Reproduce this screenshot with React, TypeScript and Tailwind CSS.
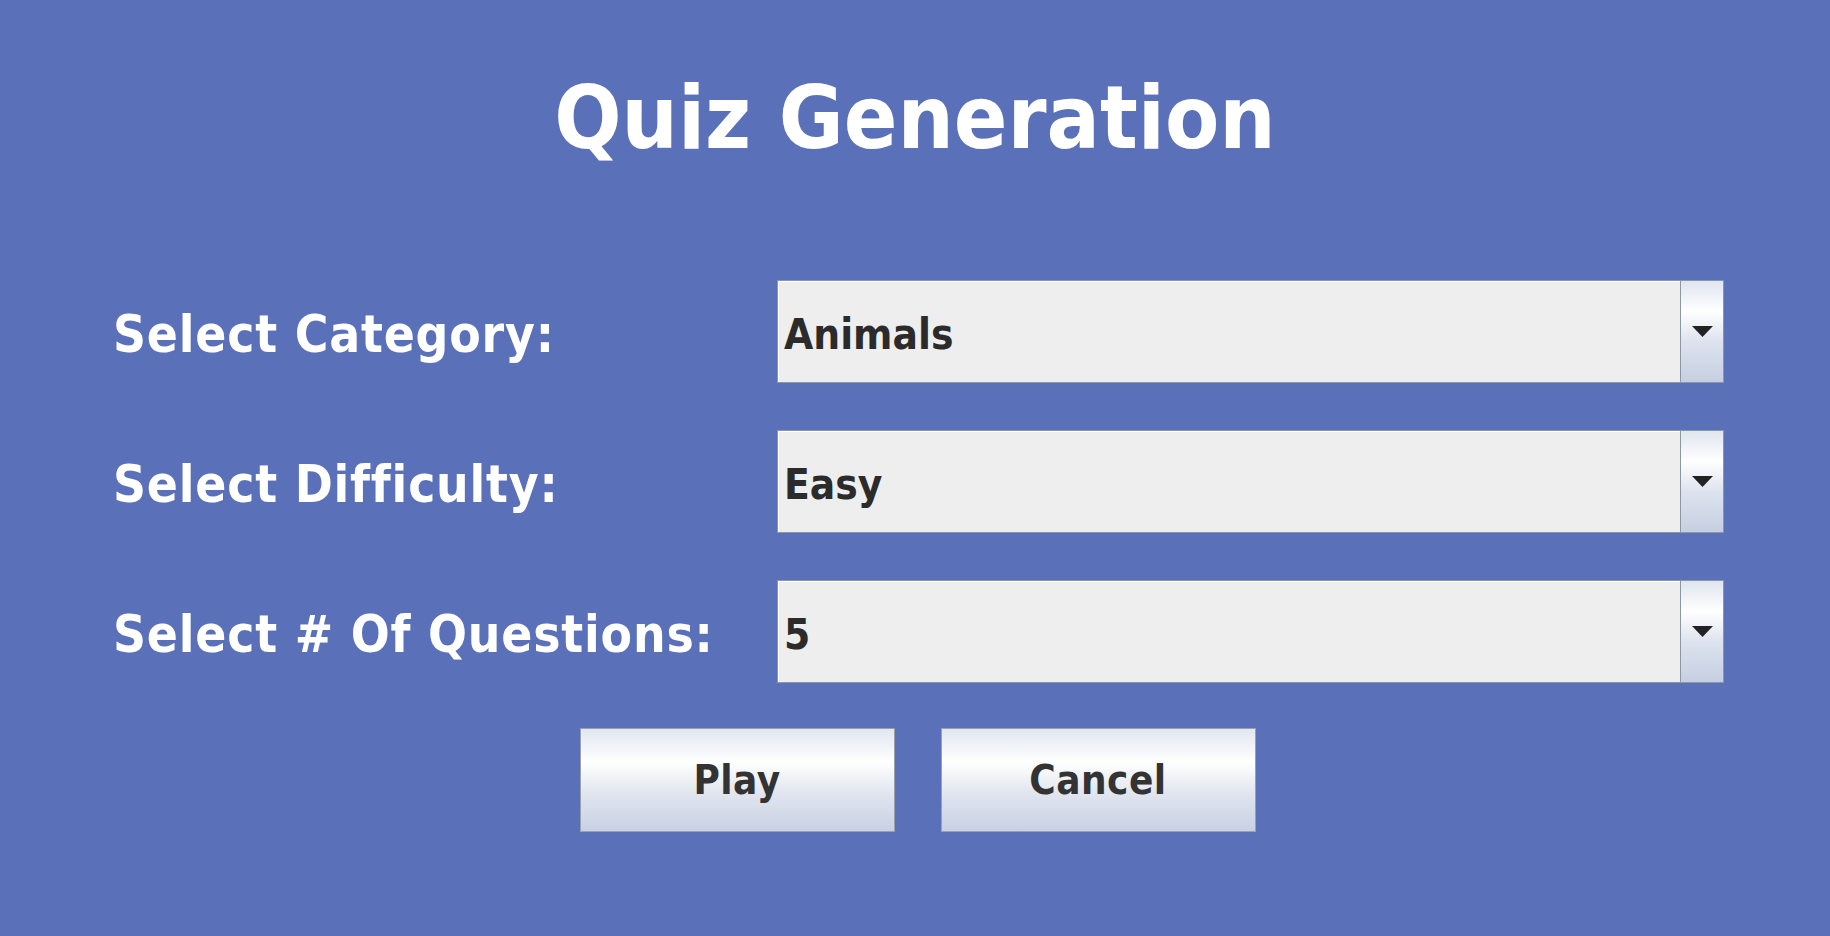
import { useState } from 'react';

const font = "font-['DejaVu_Sans_Condensed','DejaVu_Sans',Tahoma,sans-serif]";

interface ComboProps {
  value: string;
  options: string[];
  onChange: (v: string) => void;
}

const Combo = ({ value, options, onChange }: ComboProps) => (
  <div className="relative flex h-[103px] w-[947px] border border-[#8d96a3] bg-[#eeeeee]">
    <div className="flex flex-1 items-center border-t border-l border-white pt-[6px] pl-[5px]">
      <span className={`${font} text-[42px] font-bold leading-none text-[#2b2b2b]`}>{value}</span>
    </div>
    <div className="flex w-[43px] items-center justify-center border-l border-[#8d96a3] bg-[linear-gradient(to_bottom,#dfe5ef_0%,#ffffff_30%,#dde3ee_60%,#c6cfe2_100%)]">
      <svg width="21" height="11" viewBox="0 0 21 11">
        <polygon points="0,0 21,0 10.5,11" fill="#222222" />
      </svg>
    </div>
    <select
      value={value}
      onChange={(e) => onChange(e.target.value)}
      className="absolute inset-0 cursor-pointer opacity-0"
    >
      {options.map((o) => (
        <option key={o}>{o}</option>
      ))}
    </select>
  </div>
);

const Button = ({ label }: { label: string }) => (
  <button
    className={`${font} h-[104px] w-[315px] border border-[#9aa1ad] bg-[linear-gradient(to_bottom,#e1e6f0_0%,#ffffff_32%,#dfe4ee_65%,#c8d1e4_100%)] text-[40px] font-bold leading-none tracking-[0.5px] text-[#333333]`}
  >
    {label}
  </button>
);

const App = () => {
  const [category, setCategory] = useState('Animals');
  const [difficulty, setDifficulty] = useState('Easy');
  const [count, setCount] = useState('5');

  const rows = [
    { label: 'Select Category:', value: category, options: ['Animals', 'Sports', 'History', 'Science'], set: setCategory },
    { label: 'Select Difficulty:', value: difficulty, options: ['Easy', 'Medium', 'Hard'], set: setDifficulty },
    { label: 'Select # Of Questions:', value: count, options: ['5', '10', '15', '20'], set: setCount },
  ];

  return (
    <div className="flex h-[936px] w-full flex-col items-center bg-[#5a70b9]">
      <h1 className={`${font} pt-[74px] text-[88px] font-bold leading-none text-white`}>Quiz Generation</h1>

      <div className="mt-[118px] flex w-full flex-col gap-[47px] pl-[113px]">
        {rows.map((r) => (
          <div key={r.label} className="flex h-[103px] items-center">
            <div className={`${font} w-[664px] pt-[6px] text-[51px] font-bold leading-none tracking-[0.8px] text-white`}>{r.label}</div>
            <Combo value={r.value} options={r.options} onChange={r.set} />
          </div>
        ))}
      </div>

      <div className="mt-[45px] flex gap-[46px] pl-[5px]">
        <Button label="Play" />
        <Button label="Cancel" />
      </div>
    </div>
  );
};

export default App;
